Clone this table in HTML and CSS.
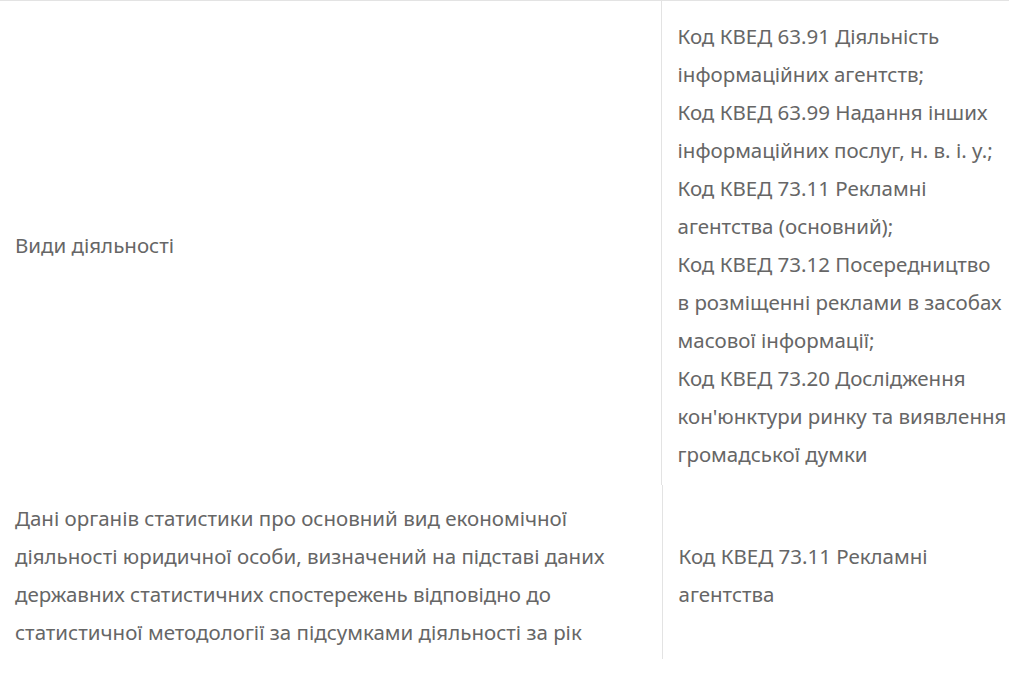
FILE: index.html
```html
<!DOCTYPE html>
<html lang="uk">
<head>
<meta charset="utf-8">
<title>Види діяльності</title>
<link rel="stylesheet" href="styles.css">
</head>
<body>
<table class="info-table info-table--first">
  <colgroup><col class="col-label-a"><col></colgroup>
  <tr>
    <td class="cell cell-label">Види діяльності</td>
    <td class="cell cell-value">Код КВЕД 63.91 Діяльність інформаційних агентств;<br>Код КВЕД 63.99 Надання інших інформаційних послуг, н. в. і. у.;<br>Код КВЕД 73.11 Рекламні агентства (основний);<br>Код КВЕД 73.12 Посередництво в розміщенні реклами в засобах масової інформації;<br>Код КВЕД 73.20 Дослідження кон'юнктури ринку та виявлення громадської думки</td>
  </tr>
</table>
<table class="info-table info-table--second">
  <colgroup><col class="col-label-b"><col></colgroup>
  <tr>
    <td class="cell cell-label cell-label--long">Дані органів статистики про основний вид економічної діяльності юридичної особи, визначений на підставі даних державних статистичних спостережень відповідно до статистичної методології за підсумками діяльності за рік</td>
    <td class="cell cell-value cell-value--short">Код КВЕД 73.11 Рекламні агентства</td>
  </tr>
</table>
</body>
</html>
```

FILE: styles.css
```css
html, body {
  margin: 0;
  padding: 0;
  background: #ffffff;
}

body {
  font-family: "Noto Sans", "Open Sans", sans-serif;
  font-size: 20.5px;
  line-height: 38px;
  color: #666666;
}

.info-table {
  border-collapse: collapse;
  table-layout: fixed;
  width: 1012px;
}

.info-table--first {
  border-top: 1px solid #e3e3e3;
}

.col-label-a {
  width: 661px;
}

.col-label-b {
  width: 662px;
}

.cell {
  vertical-align: middle;
  padding: 16px 5px 12px 15px;
}

.cell-value {
  border-left: 1px solid #e3e3e3;
  padding-left: 16px;
}

.info-table--second .cell {
  padding-top: 14px;
  padding-bottom: 8px;
}

.cell-label--long {
  padding-right: 16px;
}
```
